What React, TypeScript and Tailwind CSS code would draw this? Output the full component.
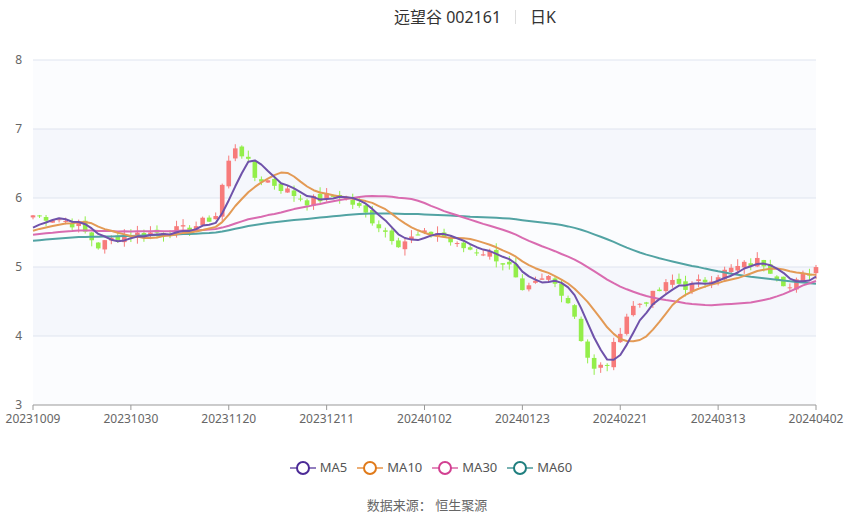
import React from "react";

const L = 33, R = 816, T = 60, B = 405;
const yOf = (v: number) => T + (8 - v) * 69;
const N = 121;
const step = (R - L) / (N - 1);
const xOf = (i: number) => L + i * step;

const keys: [number, number][] = [
  [0, 5.75], [4, 5.7], [7, 5.6], [10, 5.3], [13, 5.45], [19, 5.5], [24, 5.55], [28, 5.75], [29.5, 6.4],
  [31, 6.75], [32.5, 6.6], [34, 6.3], [36, 6.25], [39, 6.1], [42, 5.95], [47, 6.05], [50, 5.85],
  [53, 5.6], [56, 5.35], [59, 5.45], [62, 5.5], [65, 5.3], [70, 5.2], [73, 5.0], [75, 4.6], [77, 4.75],
  [79, 4.85], [81.5, 4.6], [83, 4.3], [84.5, 3.8], [86, 3.5], [88, 3.6], [90, 4.1], [91.5, 4.4],
  [94.5, 4.55], [98, 4.8], [100.5, 4.7], [105, 4.9], [111.5, 5.1], [116, 4.7], [120, 5.0],
];
function interp(i: number) {
  for (let k = 0; k < keys.length - 1; k++) {
    const [a, va] = keys[k], [b, vb] = keys[k + 1];
    if (i >= a && i <= b) return va + ((vb - va) * (i - a)) / (b - a);
  }
  return 5;
}
let seed = 7;
const rnd = () => { seed = (seed * 9301 + 49297) % 233280; return seed / 233280; };
const closes: number[] = [];
for (let i = 0; i < N; i++) closes.push(interp(i) + (rnd() - 0.5) * 0.14);
const candles = closes.map((c, i) => {
  const o = i === 0 ? c - 0.03 : closes[i - 1] + (rnd() - 0.5) * 0.08;
  const hi = Math.max(o, c) + rnd() * 0.1;
  const lo = Math.min(o, c) - rnd() * 0.1;
  return { o, c, hi, lo };
});
const pre: number[] = [];
for (let i = 0; i < 60; i++) pre.push(5.2 + (i / 60) * 0.35 + (rnd() - 0.5) * 0.1);
const all = [...pre, ...closes];
function ma(n: number) {
  return closes.map((_, i) => {
    const j = i + 60;
    let s = 0;
    for (let k = j - n + 1; k <= j; k++) s += all[k];
    return s / n;
  });
}
const path = (arr: number[]) => arr.map((v, i) => `${i ? "L" : "M"}${xOf(i).toFixed(1)},${yOf(v).toFixed(1)}`).join("");
const lines = [
  { n: 60, c: "#52a3a3", name: "MA60" },
  { n: 30, c: "#d96bb0", name: "MA30" },
  { n: 10, c: "#e39a55", name: "MA10" },
  { n: 5, c: "#6f52aa", name: "MA5" },
];
const legend = [
  { name: "MA5", c: "#4b2a96" },
  { name: "MA10", c: "#e07a1a" },
  { name: "MA30", c: "#d23f91" },
  { name: "MA60", c: "#1f7f7f" },
];
const xl = ["20231009", "20231030", "20231120", "20231211", "20240102", "20240123", "20240221", "20240313", "20240402"];

export default function App() {
  const font = { fontFamily: '"Noto Sans","Noto Sans CJK SC",sans-serif' };
  return (
    <div className="w-[850px] h-[518px] bg-white relative" style={font}>
      <div className="h-[34px] flex items-center justify-center pl-[100px] text-[16px] text-[#333]">
        <span>远望谷 002161</span>
        <span className="mx-[14px] w-px h-[14px] bg-[#ddd]" />
        <span>日K</span>
      </div>
      <svg width="850" height="420" viewBox="0 34 850 420" className="block">
        {[8, 7, 6, 5, 4].map((v, i) => (
          <rect key={v} x={L} y={yOf(v)} width={R - L} height={69} fill={i % 2 ? "#f5f7fc" : "#fbfcfe"} />
        ))}
        {[8, 7, 6, 5, 4].map((v) => (
          <line key={v} x1={L} x2={R} y1={yOf(v)} y2={yOf(v)} stroke="#dfe4ef" />
        ))}
        {[8, 7, 6, 5, 4, 3].map((v) => (
          <text key={v} x={22} y={yOf(v) + 4} fontSize="12" fill="#666" textAnchor="end">{v}</text>
        ))}
        <line x1={L} x2={R} y1={B} y2={B} stroke="#999" />
        {xl.map((t, i) => {
          const x = L + i * 15 * step;
          return (
            <g key={t}>
              <line x1={x} x2={x} y1={B} y2={B + 5} stroke="#999" />
              <text x={x} y={B + 18} fontSize="12" fill="#666" textAnchor="middle">{t}</text>
            </g>
          );
        })}
        {candles.map((k, i) => {
          const up = k.c >= k.o;
          const col = up ? "#f77b7b" : "#93ee4a";
          const x = xOf(i);
          const top = yOf(Math.max(k.o, k.c));
          const h = Math.max(1, Math.abs(k.c - k.o) * 69);
          return (
            <g key={i}>
              <line x1={x} x2={x} y1={yOf(k.hi)} y2={yOf(k.lo)} stroke={col} />
              <rect x={x - 2.3} y={top} width={4.6} height={h} fill={col} />
            </g>
          );
        })}
        {lines.map((l) => (
          <path key={l.name} d={path(ma(l.n))} fill="none" stroke={l.c} strokeWidth="2" strokeLinejoin="round" />
        ))}
      </svg>
      <div className="absolute left-0 right-0 top-[458px] flex justify-center gap-[10px] pl-[12px] text-[13px] text-[#555]">
        {legend.map((l) => (
          <div key={l.name} className="flex items-center gap-[4px]">
            <svg width="26" height="16">
              <line x1="0" x2="26" y1="8" y2="8" stroke={l.c} strokeWidth="2" opacity="0.6" />
              <circle cx="13" cy="8" r="6" fill="white" stroke={l.c} strokeWidth="2" />
            </svg>
            <span>{l.name}</span>
          </div>
        ))}
      </div>
      <div className="absolute left-0 right-0 top-[496px] text-center pl-[4px] text-[13px] text-[#666]">数据来源：&nbsp;恒生聚源</div>
    </div>
  );
}
